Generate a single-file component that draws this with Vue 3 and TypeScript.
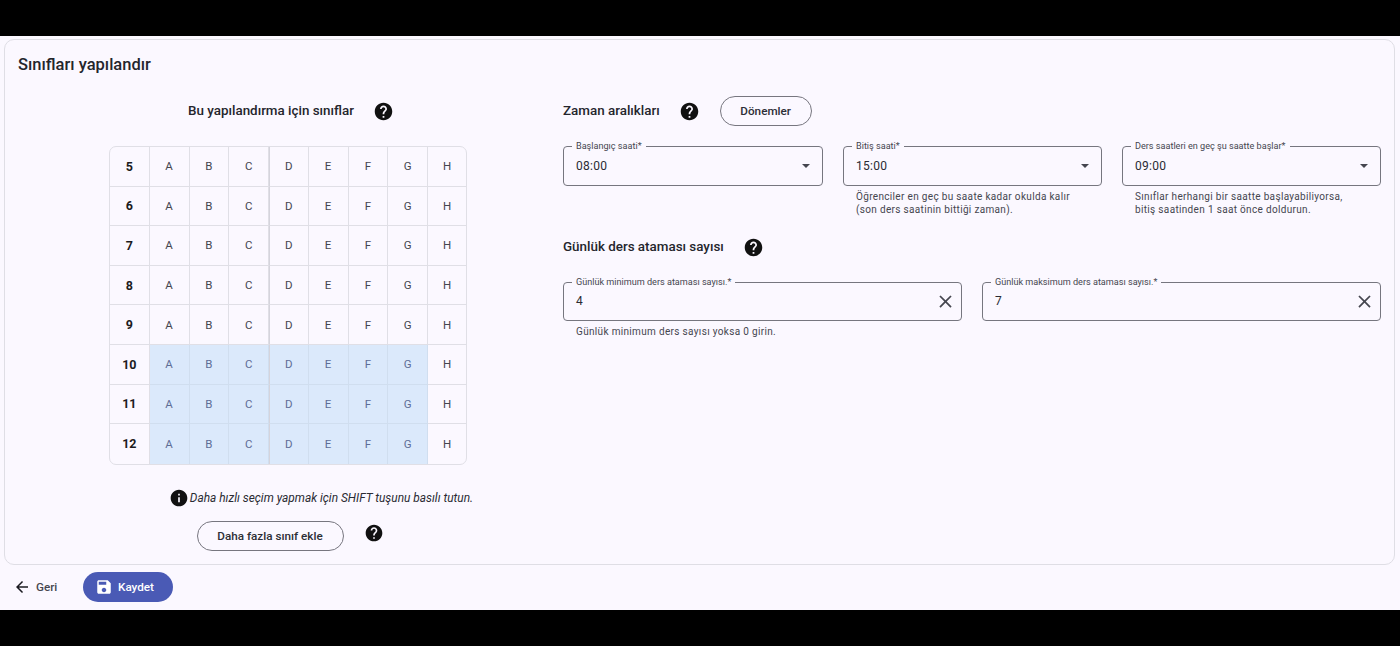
<script setup lang="ts">
const helpPath =
  'M12 2C6.48 2 2 6.48 2 12s4.48 10 10 10 10-4.48 10-10S17.52 2 12 2zm1 17h-2v-2h2v2zm2.07-7.75l-.9.92C13.45 12.9 13 13.5 13 15h-2v-.5c0-1.1.45-2.1 1.17-2.83l1.24-1.26c.37-.36.59-.86.59-1.41 0-1.1-.9-2-2-2s-2 .9-2 2H8c0-2.21 1.79-4 4-4s4 1.79 4 4c0 .88-.36 1.68-.93 2.25z'
const closePath =
  'M19 6.41L17.59 5 12 10.59 6.41 5 5 6.41 10.59 12 5 17.59 6.41 19 12 13.41 17.59 19 19 17.59 13.41 12z'

const grades = [5, 6, 7, 8, 9, 10, 11, 12]
const letters = ['A', 'B', 'C', 'D', 'E', 'F', 'G', 'H']
const isSelected = (grade: number, letter: string) => grade >= 10 && letter !== 'H'

const selects = [
  { label: 'Başlangıç saati*', value: '08:00', help: [] as string[] },
  {
    label: 'Bitiş saati*',
    value: '15:00',
    help: ['Öğrenciler en geç bu saate kadar okulda kalır', '(son ders saatinin bittiği zaman).'],
  },
  {
    label: 'Ders saatleri en geç şu saatte başlar*',
    value: '09:00',
    help: ['Sınıflar herhangi bir saatte başlayabiliyorsa,', 'bitiş saatinden 1 saat önce doldurun.'],
  },
]
const numbers = [
  { label: 'Günlük minimum ders ataması sayısı.*', value: '4', help: 'Günlük minimum ders sayısı yoksa 0 girin.' },
  { label: 'Günlük maksimum ders ataması sayısı.*', value: '7', help: '' },
]
</script>

<template>
  <div class="page">
    <div class="band"></div>
    <main class="content">
      <section class="card">
        <h1 class="title">Sınıfları yapılandır</h1>
        <div class="columns">
          <div class="left">
            <div class="heading-row left-heading">
              <h2 class="heading">Bu yapılandırma için sınıflar</h2>
              <svg class="help" viewBox="0 0 24 24"><path :d="helpPath" /></svg>
            </div>
            <div class="grid">
              <template v-for="grade in grades" :key="grade">
                <div class="cell grade" :class="{ bottom: grade === 12 }">{{ grade }}</div>
                <div
                  v-for="letter in letters"
                  :key="letter"
                  class="cell"
                  :class="{ selected: isSelected(grade, letter), split: letter === 'D', last: letter === 'H', bottom: grade === 12 }"
                >
                  {{ letter }}
                </div>
              </template>
            </div>
            <p class="shift">
              <svg class="info" viewBox="0 0 24 24">
                <path d="M12 2C6.48 2 2 6.48 2 12s4.48 10 10 10 10-4.48 10-10S17.52 2 12 2zm1 15h-2v-6h2v6zm0-8h-2V7h2v2z" />
              </svg>
              <span>Daha hızlı seçim yapmak için SHIFT tuşunu basılı tutun.</span>
            </p>
            <div class="more">
              <button class="pill more-btn" type="button">Daha fazla sınıf ekle</button>
              <svg class="help more-help" viewBox="0 0 24 24"><path :d="helpPath" /></svg>
            </div>
          </div>

          <div class="right">
            <div class="heading-row time-heading">
              <h2 class="heading">Zaman aralıkları</h2>
              <svg class="help" viewBox="0 0 24 24"><path :d="helpPath" /></svg>
              <button class="pill period-btn" type="button">Dönemler</button>
            </div>
            <div class="fields three">
              <div v-for="s in selects" :key="s.label" class="field-wrap">
                <div class="field">
                  <span class="label">{{ s.label }}</span>
                  <span class="value">{{ s.value }}</span>
                  <span class="caret"></span>
                </div>
                <p v-if="s.help.length" class="help-text">
                  <span v-for="line in s.help" :key="line">{{ line }}</span>
                </p>
              </div>
            </div>
            <div class="heading-row count-heading">
              <h2 class="heading">Günlük ders ataması sayısı</h2>
              <svg class="help" viewBox="0 0 24 24"><path :d="helpPath" /></svg>
            </div>
            <div class="fields two">
              <div v-for="n in numbers" :key="n.label" class="field-wrap">
                <div class="field">
                  <span class="label">{{ n.label }}</span>
                  <span class="value">{{ n.value }}</span>
                  <svg class="close" viewBox="0 0 24 24"><path :d="closePath" /></svg>
                </div>
                <p v-if="n.help" class="help-text"><span>{{ n.help }}</span></p>
              </div>
            </div>
          </div>
        </div>
      </section>
      <footer class="actions">
        <button class="back" type="button">
          <svg viewBox="0 0 24 24"><path d="M20 11H7.83l5.59-5.59L12 4l-8 8 8 8 1.41-1.41L7.83 13H20v-2z" /></svg>
          <span>Geri</span>
        </button>
        <button class="save" type="button">
          <svg viewBox="0 0 24 24">
            <path d="M17 3H5c-1.11 0-2 .9-2 2v14c0 1.1.89 2 2 2h14c1.1 0 2-.9 2-2V7l-4-4zm-5 16c-1.66 0-3-1.34-3-3s1.34-3 3-3 3 1.34 3 3-1.34 3-3 3zm3-10H5V5h10v4z" />
          </svg>
          <span>Kaydet</span>
        </button>
      </footer>
    </main>
    <div class="band"></div>
  </div>
</template>

<style scoped>
.page {
  display: flex;
  flex-direction: column;
  height: 646px;
  font-family: Roboto, "Liberation Sans", sans-serif;
  color: #1b1b21;
}
.band {
  height: 36px;
  flex: none;
  background: #000;
}
.content {
  flex: 1;
  display: flex;
  flex-direction: column;
  padding: 3px 5px 0 4px;
  background: #fbf8ff;
}
.card {
  height: 526px;
  box-sizing: border-box;
  border: 1px solid #dfdee5;
  border-radius: 10px;
  padding: 15px 13px 0;
}
.title {
  margin: 0;
  font-size: 16.5px;
  line-height: 20px;
  font-weight: 500;
  color: #24252c;
}
.columns {
  display: flex;
  gap: 5px;
}
.left {
  width: 540px;
  display: flex;
  flex-direction: column;
  align-items: center;
}
.right {
  width: 818px;
}
.heading-row {
  display: flex;
  align-items: center;
}
.heading {
  margin: 0;
  font-size: 13.4px;
  line-height: 20px;
  font-weight: 500;
  color: #24252c;
}
.help {
  width: 21px;
  height: 21px;
  fill: #111;
  flex: none;
}
.left-heading {
  margin-top: 26px;
  height: 20px;
  gap: 19px;
  margin-left: 6px;
}
.grid {
  margin-top: 25px;
  width: 358px;
  display: grid;
  grid-template-columns: repeat(8, 39.75px) 1fr;
  grid-auto-rows: 39.6px;
  border: 1px solid #e0dfe6;
  border-radius: 7px;
  overflow: hidden;
  box-sizing: border-box;
}
.cell {
  display: flex;
  align-items: center;
  justify-content: center;
  font-size: 11.5px;
  color: #45464f;
  border-right: 1px solid #e0dfe6;
  border-bottom: 1px solid #e0dfe6;
  box-sizing: border-box;
}
.cell.last {
  border-right: none;
}
.cell.bottom {
  border-bottom: none;
}
.cell.grade {
  font-size: 12.5px;
  font-weight: 700;
  color: #1b1b21;
}
.cell.selected {
  background: #dbe9fb;
  color: #5f6d96;
  border-color: #d0deef;
}
.cell.split {
  border-left: 1px solid #d5d4dc;
}
.shift {
  margin: 23px 0 0 66px;
  display: flex;
  align-items: center;
  gap: 1px;
  font-size: 11.9px;
  line-height: 18px;
  font-style: italic;
  color: #2a2b33;
  white-space: nowrap;
}
.info {
  width: 20px;
  height: 20px;
  fill: #111;
  flex: none;
}
.more {
  display: flex;
  align-items: flex-start;
  margin-top: 13px;
  margin-left: 4px;
}
.pill {
  font-family: inherit;
  font-size: 11.7px;
  font-weight: 500;
  color: #2d2e36;
  background: transparent;
  border: 1px solid #77767f;
  border-radius: 15px;
  height: 30px;
  padding: 0;
}
.more-btn {
  width: 147px;
}
.more-help {
  margin: 2px 0 0 20px;
  width: 20px;
  height: 20px;
}
.time-heading {
  margin-top: 21px;
  height: 30px;
}
.time-heading .help {
  margin-left: 19px;
}
.period-btn {
  width: 92px;
  margin-left: 20px;
}
.fields {
  display: grid;
  gap: 20px;
}
.three {
  grid-template-columns: 260px 259px 259px;
  margin-top: 20px;
  height: 70px;
}
.two {
  grid-template-columns: repeat(2, 1fr);
  margin-top: 25px;
}
.two .field {
  height: 39px;
  padding-right: 5px;
}
.count-heading {
  margin-top: 21px;
  height: 20px;
  gap: 19px;
}
.field {
  position: relative;
  height: 40px;
  box-sizing: border-box;
  border: 1px solid #76767f;
  border-radius: 4px;
  display: flex;
  align-items: center;
  justify-content: space-between;
  padding: 0 9px 0 12px;
}
.label {
  position: absolute;
  left: 8px;
  top: -6px;
  padding: 0 4px;
  font-size: 9.1px;
  line-height: 11px;
  color: #45464f;
  background: #fbf8ff;
  white-space: nowrap;
}
.value {
  font-size: 12px;
  letter-spacing: 0.3px;
  color: #2a2b33;
  padding-bottom: 1px;
}
.caret {
  width: 0;
  height: 0;
  margin-right: 3px;
  border-left: 4.5px solid transparent;
  border-right: 4.5px solid transparent;
  border-top: 4.5px solid #45464f;
}
.close {
  width: 21px;
  height: 21px;
  fill: #45464f;
}
.help-text {
  margin: 4px 0 0;
  padding-left: 13px;
  font-size: 10px;
  line-height: 13px;
  letter-spacing: 0.33px;
  color: #45464f;
}
.help-text span {
  display: block;
  white-space: nowrap;
}
.actions {
  display: flex;
  align-items: center;
  height: 43px;
}
.back {
  display: flex;
  align-items: center;
  gap: 5px;
  width: 79px;
  padding: 0 0 0 9px;
  background: none;
  border: 0;
  font-family: inherit;
  font-size: 11.7px;
  font-weight: 500;
  color: #45464f;
}
.back svg {
  width: 18px;
  height: 18px;
  fill: #1b1b21;
}
.save {
  display: flex;
  align-items: center;
  gap: 5px;
  width: 90px;
  height: 30px;
  padding: 0 0 0 12px;
  border: 0;
  border-radius: 15px;
  background: #4a5ab5;
  color: #fff;
  font-family: inherit;
  font-size: 11.7px;
  font-weight: 500;
}
.save svg {
  width: 18px;
  height: 18px;
  fill: #fff;
}
</style>

<style>
html,
body {
  margin: 0;
  background: #fbf8ff;
}
</style>
